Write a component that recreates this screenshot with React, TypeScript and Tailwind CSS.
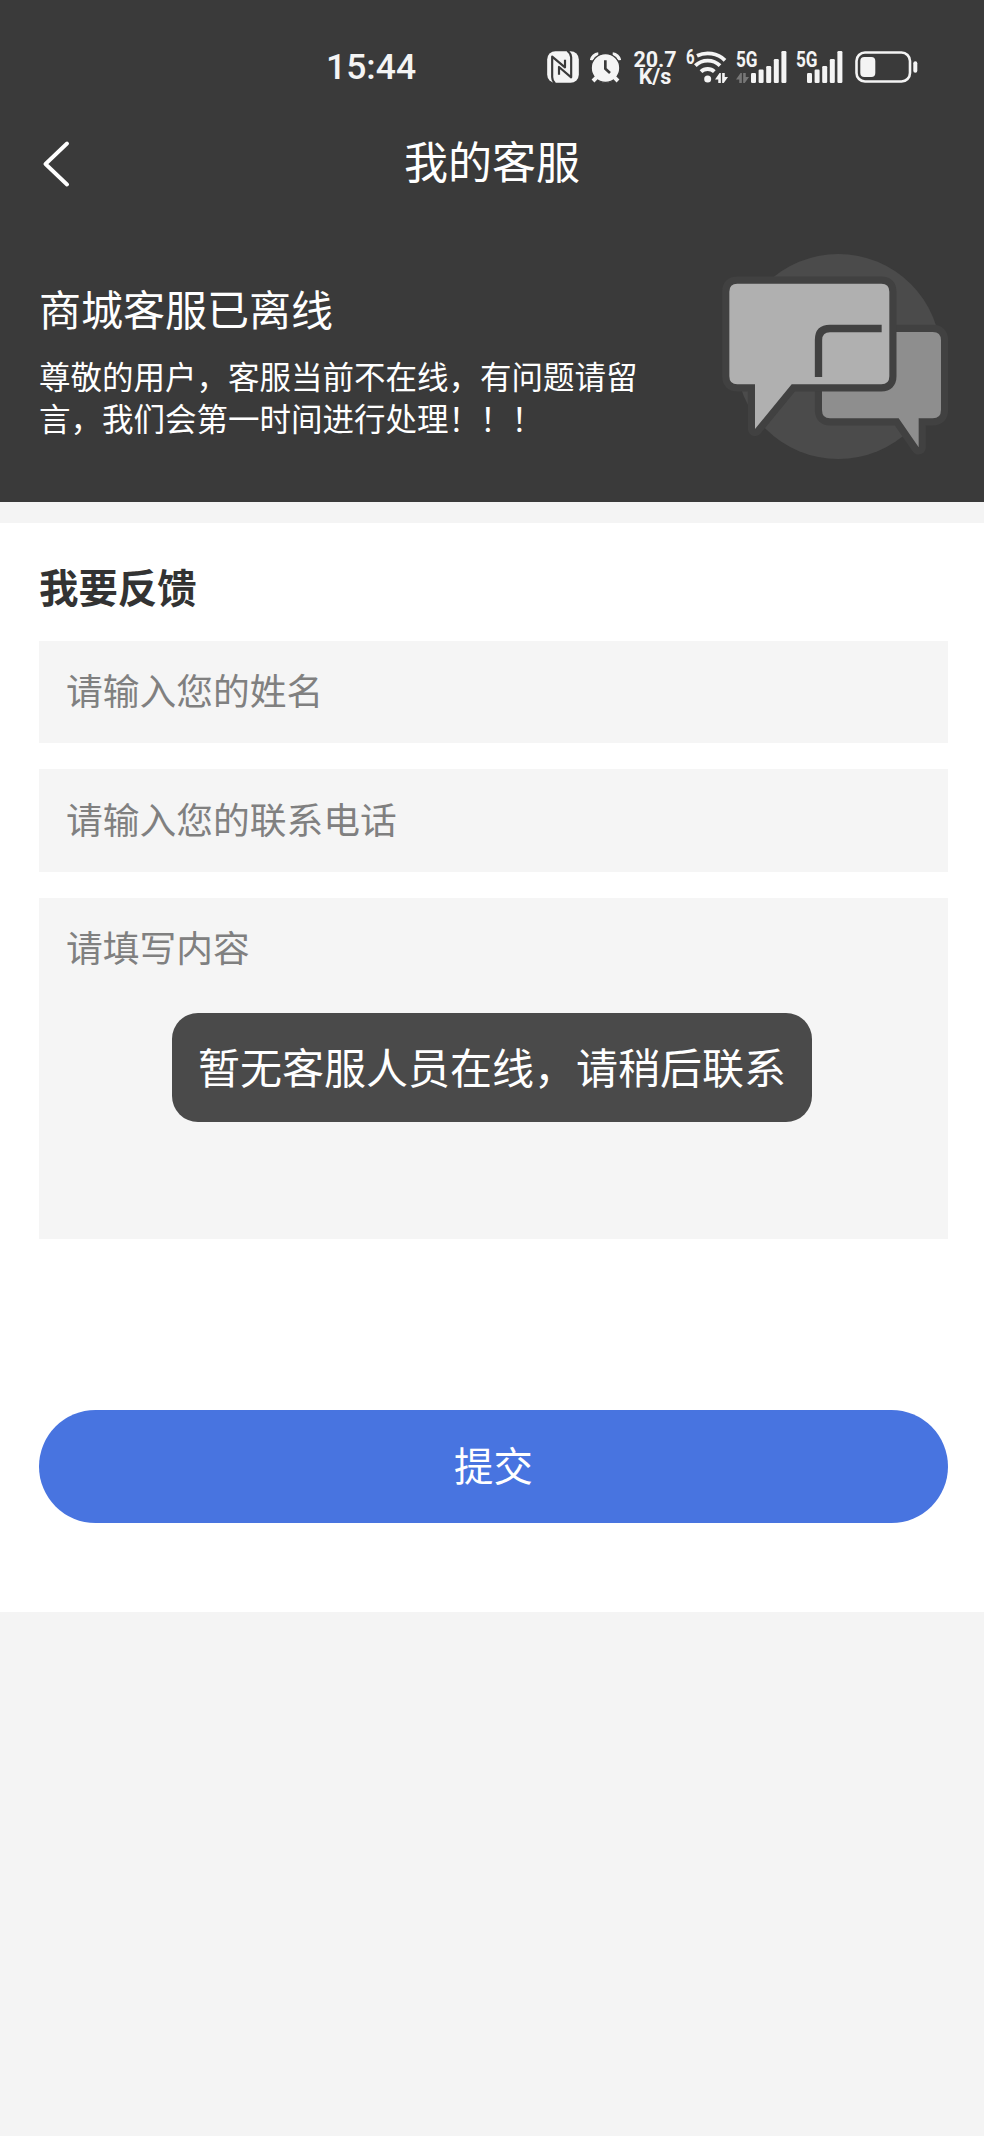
import { clsx } from 'clsx';

function NfcIcon() {
  return (
    <svg viewBox="0 0 96 96" className="h-8 w-8 shrink-0" fill="none">
      <rect x="0.5" y="0.5" width="95" height="95" rx="25" fill="#f4f4f4" />
      <path
        d="M24 97C17 91 15.5 86 15.5 78V17L54 49V26"
        stroke="#3a3a3a"
        strokeWidth="6.5"
        strokeLinejoin="round"
      />
      <path
        d="M61 -1C69 5 72.5 10 72.5 19V79L36 48V71"
        stroke="#3a3a3a"
        strokeWidth="6.5"
        strokeLinejoin="round"
      />
    </svg>
  );
}

function AlarmIcon() {
  return (
    <svg viewBox="0 0 93 93" className="mt-px h-[31px] w-[31px] shrink-0" fill="none">
      <path d="M5 25A22 22 0 0 1 25 6M68 6A22 22 0 0 1 88 25" stroke="#f4f4f4" strokeWidth="11" />
      <circle cx="46.5" cy="48" r="43" fill="#f4f4f4" stroke="#3a3a3a" strokeWidth="4" />
      <path d="M22 74L9 87M71 74L84 87" stroke="#f4f4f4" strokeWidth="12" />
      <path d="M46 25V50L60 63" stroke="#3a3a3a" strokeWidth="8" />
    </svg>
  );
}

function DataArrows({ className }: { className?: string }) {
  return (
    <svg viewBox="0 0 40 32" className={clsx('h-[10.5px] w-[13px]', className)} fill="currentColor">
      <path d="M18 0V32H10V20H0L14 0ZM22 32V0H30V12H40L26 32Z" />
    </svg>
  );
}

function WifiIcon() {
  return (
    <div className="relative h-[34px] w-[42px] shrink-0">
      <span className="absolute top-[-3px] left-0 origin-left scale-x-75 text-[20px] leading-none font-bold">
        6
      </span>
      <svg viewBox="0 0 126 102" className="h-full w-full" fill="none" stroke="#f4f4f4" strokeWidth="11.5">
        <path d="M33 17.5A75 75 0 0 1 117 31" />
        <path d="M28 47A53 53 0 0 1 102 47" />
        <path d="M45 65A29 29 0 0 1 85 65" />
        <circle cx="65" cy="87" r="10.5" fill="#f4f4f4" stroke="none" />
      </svg>
      <DataArrows className="absolute right-0 bottom-px" />
    </div>
  );
}

const bars = [
  { x: 0, height: 10 },
  { x: 7.6, height: 13.5 },
  { x: 15.2, height: 17 },
  { x: 22.8, height: 24 },
  { x: 30.4, height: 32 },
];

function Signal({ uplink = false, className }: { uplink?: boolean; className?: string }) {
  return (
    <div className={clsx('relative flex h-8 shrink-0 justify-end', className)}>
      <span className="absolute -top-px left-0 origin-left scale-x-[0.8] text-[21.5px] leading-[19px] font-bold">
        5G
      </span>
      {uplink && <DataArrows className="absolute bottom-0 left-0 text-[#777777]" />}
      <svg viewBox="0 0 36 32" className="h-8 w-9" fill="#f4f4f4">
        {bars.map((bar) => (
          <rect key={bar.x} x={bar.x} y={32 - bar.height} width="5" height={bar.height} rx="1.2" />
        ))}
      </svg>
    </div>
  );
}

function BatteryIcon() {
  return (
    <svg viewBox="0 0 63 32" className="h-8 w-[63px] shrink-0" fill="none">
      <rect x="1.5" y="1.5" width="53.5" height="29" rx="8.5" stroke="#f4f4f4" strokeWidth="2.6" />
      <rect x="5.3" y="6" width="15" height="20" rx="4" fill="#f4f4f4" />
      <rect x="58.3" y="10.3" width="4" height="11.5" rx="2" fill="#f4f4f4" />
    </svg>
  );
}

function StatusBar() {
  return (
    <div className="flex h-[100px] items-start pt-[51px] font-['Roboto','Noto_Sans_CJK_SC',sans-serif] text-[#f4f4f4]">
      <span className="ml-[326px] w-[221px] shrink-0 text-[35.5px] leading-8 font-medium">15:44</span>
      <NfcIcon />
      <div className="ml-[11px]">
        <AlarmIcon />
      </div>
      <div className="ml-[11px] flex w-[46px] shrink-0 flex-col items-center text-[21.5px] leading-[17px] font-bold">
        <span>20.7</span>
        <span>K/s</span>
      </div>
      <div className="-mt-px ml-[8px]">
        <WifiIcon />
      </div>
      <Signal uplink className="ml-[8px] w-[51px]" />
      <Signal className="ml-[9px] w-[47px]" />
      <div className="ml-[12px]">
        <BatteryIcon />
      </div>
    </div>
  );
}

function ChatIllustration() {
  return (
    <svg viewBox="60 36 690 626" className="h-[208.67px] w-[230px] shrink-0" strokeLinejoin="round">
      <circle cx="415" cy="349.5" r="307.5" fill="#4b4b4b" />
      {/* back bubble */}
      <g className="[paint-order:stroke]" stroke="#414141" strokeWidth="43">
        <path
          d="M390 276H698Q723 276 723 301V510Q723 535 698 535H656V622L596 535H390Q366 535 366 510V301Q366 276 390 276Z"
          fill="#8e8e8e"
        />
        {/* front bubble */}
        <path
          d="M112 131H544Q568 131 568 155V409Q568 433 544 433H275L165 567V433H112Q88 433 88 409V155Q88 131 112 131Z"
          fill="#b0b0b0"
        />
      </g>
      <path d="M545 265.5H390Q355.5 265.5 355.5 300V411" fill="none" stroke="#414141" strokeWidth="22" />
    </svg>
  );
}

function Header() {
  return (
    <header className="h-[502px] bg-[#3a3a3a] text-white">
      <StatusBar />
      <nav className="grid h-[120px] grid-cols-[1fr_auto_1fr] items-center">
        <button type="button" aria-label="返回" className="mt-[8px] ml-[42px] w-7">
          <svg viewBox="0 0 28 46" className="h-[46px] w-7" fill="none">
            <path
              d="M25 2.5L3.5 23L25 43.5"
              stroke="white"
              strokeWidth="3.8"
              strokeLinecap="round"
              strokeLinejoin="round"
            />
          </svg>
        </button>
        <h1 className="text-[44px] leading-[64px]">我的客服</h1>
      </nav>
      <div className="flex justify-between pr-[34px] pl-[39px]">
        <div className="w-[610px] pt-[58px]">
          <h2 className="text-[42px] leading-[60px]">商城客服已离线</h2>
          <p className="mt-[16px] text-[31.5px] leading-[42px]">
            尊敬的用户，客服当前不在线，有问题请留言，我们会第一时间进行处理！！！
          </p>
        </div>
        <div className="pt-[32px]">
          <ChatIllustration />
        </div>
      </div>
    </header>
  );
}

const fieldClass =
  'block w-full rounded-none bg-[#f5f5f5] px-[27px] text-[36.75px] text-[#333333] outline-none placeholder:text-[#808080] placeholder:opacity-100';

function FeedbackForm() {
  return (
    <form className="mt-[21px] h-[1089px] bg-white pr-9 pl-[39px]">
      <h2 className="pt-[33px] text-[39.4px] leading-[60px] font-bold text-[#333333]">我要反馈</h2>
      <div className="mt-[25px] flex flex-col gap-[26px]">
        <input className={clsx(fieldClass, 'h-[102px] pb-[6px]')} placeholder="请输入您的姓名" />
        <input className={clsx(fieldClass, 'h-[103px] pb-[5px]')} placeholder="请输入您的联系电话" />
        <textarea
          className={clsx(fieldClass, 'h-[341px] resize-none pt-[21px] leading-[54px]')}
          placeholder="请填写内容"
        />
      </div>
      <button
        type="button"
        className="mt-[171px] flex h-[113px] w-full items-center justify-center rounded-full bg-[#4874e0] pb-[5px] text-[39.4px] text-white"
      >
        提交
      </button>
    </form>
  );
}

function Toast({ message }: { message: string }) {
  return (
    <div
      role="status"
      className="absolute top-[1013px] left-1/2 flex h-[109px] w-[640px] -translate-x-1/2 items-center justify-center rounded-[26px] bg-[#4a4a4a] pb-[4px] text-[42px] whitespace-nowrap text-white"
    >
      {message}
    </div>
  );
}

export default function App() {
  return (
    <div className="relative h-[2136px] w-[984px] overflow-hidden bg-[#f4f4f4] font-['Noto_Sans_CJK_SC',sans-serif]">
      <Header />
      <FeedbackForm />
      <Toast message="暂无客服人员在线，请稍后联系" />
    </div>
  );
}
